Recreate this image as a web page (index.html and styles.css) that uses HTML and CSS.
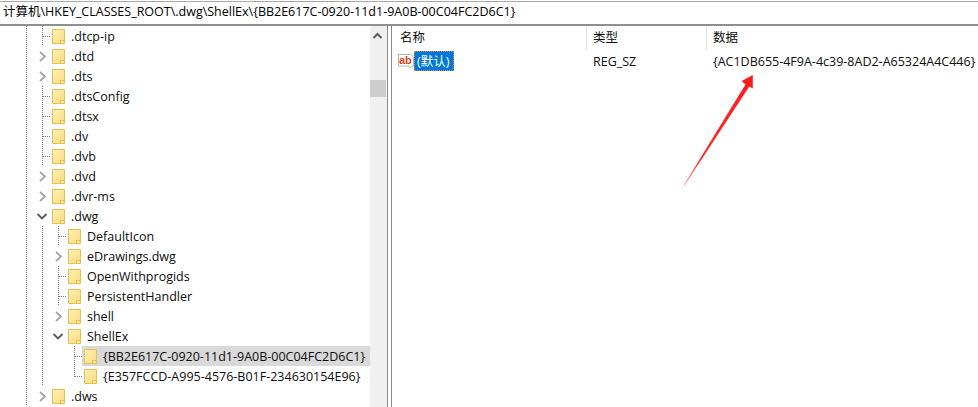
FILE: index.html
```html
<!DOCTYPE html>
<html lang="zh">
<head>
<meta charset="utf-8">
<title>注册表编辑器</title>
<link rel="stylesheet" href="styles.css">
</head>
<body>
<svg class="defs" width="0" height="0" aria-hidden="true">
  <defs>
    <linearGradient id="fg" x1="0" y1="0" x2="1" y2="1">
      <stop offset="0" stop-color="#fff0b8"/>
      <stop offset="1" stop-color="#fbdc80"/>
    </linearGradient>
    <symbol id="folder" viewBox="0 0 13 15">
      <path d="M.5.500H12.500V14.500H.5Z" fill="url(#fg)" stroke="#e8c04e"/>
      <path d="M8.500 14.500V11.500H12.500" fill="#fff0b8" stroke="#e8c04e"/>
    </symbol>
    <symbol id="cr" viewBox="0 0 16 20"><path d="M6 6l5 4.500-5 4.500" fill="none" stroke="#a6a6a6" stroke-width="1.800"/></symbol>
    <symbol id="cd" viewBox="0 0 16 20"><path d="M3.500 8l4.500 4.500L12.500 8" fill="none" stroke="#595959" stroke-width="1.800"/></symbol>
  </defs>
</svg>

<header class="address">计算机\HKEY_CLASSES_ROOT\.dwg\ShellEx\{BB2E617C-0920-11d1-9A0B-00C04FC2D6C1}</header>

<main class="panes">
  <nav class="tree">
    <div class="row"><i class="c v"></i><i class="c v t"></i><svg class="f"><use href="#folder"/></svg><span>.dtcp-ip</span></div>
    <div class="row"><i class="c v"></i><svg class="c"><use href="#cr"/></svg><svg class="f"><use href="#folder"/></svg><span>.dtd</span></div>
    <div class="row"><i class="c v"></i><svg class="c"><use href="#cr"/></svg><svg class="f"><use href="#folder"/></svg><span>.dts</span></div>
    <div class="row"><i class="c v"></i><i class="c v t"></i><svg class="f"><use href="#folder"/></svg><span>.dtsConfig</span></div>
    <div class="row"><i class="c v"></i><i class="c v t"></i><svg class="f"><use href="#folder"/></svg><span>.dtsx</span></div>
    <div class="row"><i class="c v"></i><i class="c v t"></i><svg class="f"><use href="#folder"/></svg><span>.dv</span></div>
    <div class="row"><i class="c v"></i><i class="c v t"></i><svg class="f"><use href="#folder"/></svg><span>.dvb</span></div>
    <div class="row"><i class="c v"></i><svg class="c"><use href="#cr"/></svg><svg class="f"><use href="#folder"/></svg><span>.dvd</span></div>
    <div class="row"><i class="c v"></i><svg class="c"><use href="#cr"/></svg><svg class="f"><use href="#folder"/></svg><span>.dvr-ms</span></div>
    <div class="row"><i class="c v"></i><svg class="c"><use href="#cd"/></svg><svg class="f"><use href="#folder"/></svg><span>.dwg</span></div>
    <div class="row"><i class="c v"></i><i class="c v"></i><i class="c v t"></i><svg class="f"><use href="#folder"/></svg><span>DefaultIcon</span></div>
    <div class="row"><i class="c v"></i><i class="c v"></i><svg class="c"><use href="#cr"/></svg><svg class="f"><use href="#folder"/></svg><span>eDrawings.dwg</span></div>
    <div class="row"><i class="c v"></i><i class="c v"></i><i class="c v t"></i><svg class="f"><use href="#folder"/></svg><span>OpenWithprogids</span></div>
    <div class="row"><i class="c v"></i><i class="c v"></i><i class="c v t"></i><svg class="f"><use href="#folder"/></svg><span>PersistentHandler</span></div>
    <div class="row"><i class="c v"></i><i class="c v"></i><svg class="c"><use href="#cr"/></svg><svg class="f"><use href="#folder"/></svg><span>shell</span></div>
    <div class="row"><i class="c v"></i><i class="c v"></i><svg class="c"><use href="#cd"/></svg><svg class="f"><use href="#folder"/></svg><span>ShellEx</span></div>
    <div class="row selected"><i class="c v"></i><i class="c v"></i><i class="c"></i><i class="c v t"></i><div class="sel"><svg class="f"><use href="#folder"/></svg><span>{BB2E617C-0920-11d1-9A0B-00C04FC2D6C1}</span></div></div>
    <div class="row"><i class="c v"></i><i class="c v"></i><i class="c"></i><i class="c l"></i><svg class="f"><use href="#folder"/></svg><span>{E357FCCD-A995-4576-B01F-234630154E96}</span></div>
    <div class="row"><i class="c v"></i><svg class="c"><use href="#cr"/></svg><svg class="f"><use href="#folder"/></svg><span>.dws</span></div>
  </nav>

  <div class="scrollbar">
    <svg class="up" viewBox="0 0 17 17"><path d="M3.500 12l4-4 4 4" fill="none" stroke="#606060" stroke-width="2"/></svg>
    <div class="thumb"></div>
  </div>

  <div class="splitter"></div>

  <section class="list">
    <div class="cols head">
      <div class="col name">名称</div>
      <div class="col type">类型</div>
      <div class="col data">数据</div>
    </div>
    <div class="cols item">
      <div class="col name">
        <svg class="ab" viewBox="0 0 16 16">
          <path d="M.5 1.500H12.500L15.500 4V12.500L12 14.500L9 13H.5Z" fill="#fff" stroke="#b5b5b5"/>
          <text x="1" y="11" class="abtext">ab</text>
        </svg>
        <span class="value">(默认)</span>
      </div>
      <div class="col type">REG_SZ</div>
      <div class="col data">{AC1DB655-4F9A-4c39-8AD2-A65324A4C446}</div>
    </div>
  </section>
</main>

<svg class="arrow" viewBox="0 0 978 407" aria-hidden="true">
  <defs>
    <linearGradient id="ag" gradientUnits="userSpaceOnUse" x1="684" y1="185" x2="752" y2="75">
      <stop offset="0" stop-color="#ff5a5a" stop-opacity=".6"/>
      <stop offset=".25" stop-color="#ff2a2a"/>
      <stop offset="1" stop-color="#ff1a1a"/>
    </linearGradient>
  </defs>
  <path d="M683.500 185.500L745.500 84.500L741.700 81L752.800 75L752.800 88.500L749.300 86.500L684.500 185.500Z" fill="url(#ag)"/>
</svg>
</body>
</html>
```

FILE: styles.css
```css
* { box-sizing: border-box; }
html, body { margin: 0; height: 100%; }
body {
  width: 978px;
  height: 407px;
  overflow: hidden;
  background: #fff;
  color: #0d0d0d;
  font: 12.500px/22px "Open Sans", "Noto Sans CJK SC", sans-serif;
  display: flex;
  flex-direction: column;
}
.defs { display: block; height: 0; }

.address {
  height: 25px;
  flex: none;
  padding-left: 3px;
  border-top: 1px solid #a9a9a9;
  margin-top: 1px;
  border-bottom: 2px solid #8f8f8f;
  font-size: 12.500px;
  line-height: 19px;
  color: #000;
  white-space: nowrap;
  overflow: hidden;
}
.panes { flex: 1; display: flex; min-height: 0; }

.tree { width: 370px; flex: none; overflow: hidden; }
.row { height: 20px; display: flex; padding-left: 18px; white-space: nowrap; }
.c { display: block; width: 16px; height: 20px; flex: none; }
.v { background: repeating-linear-gradient(#7a7a7a 0 1px, transparent 1px 2px) 8px 0/1px 100% no-repeat; }
.t {
  background:
    repeating-linear-gradient(#7a7a7a 0 1px, transparent 1px 2px) 8px 0/1px 100% no-repeat,
    repeating-linear-gradient(90deg, #7a7a7a 0 1px, transparent 1px 2px) 9px 10px/7px 1px no-repeat;
}
.l {
  background:
    repeating-linear-gradient(#7a7a7a 0 1px, transparent 1px 2px) 8px 0/1px 11px no-repeat,
    repeating-linear-gradient(90deg, #7a7a7a 0 1px, transparent 1px 2px) 9px 10px/7px 1px no-repeat;
}
.f { width: 13px; height: 15px; flex: none; margin: 3px 6px 0 2px; }
.sel { flex: 1; display: flex; background: #d9d9d9; }

.scrollbar { width: 17px; flex: none; background: #f0f0f0; }
.up { display: block; width: 17px; height: 17px; }
.thumb { width: 16px; height: 17px; margin-top: 37px; background: #cdcdcd; }

.splitter {
  width: 5px;
  flex: none;
  border-left: 1px solid #8b8b8b;
  border-right: 1px solid #8b8b8b;
}

.list { flex: 1; min-width: 0; }
.cols { display: flex; }
.head { height: 25px; }
.head .col { height: 24px; line-height: 24px; }
.item { height: 20px; }
.col { white-space: nowrap; flex: none; }
.name { width: 194px; padding-left: 8px; }
.type { width: 120px; padding-left: 7px; }
.data { padding-left: 7px; }
.head .type, .head .data { border-left: 1px solid #e3e3e3; padding-left: 6px; }
.item .name { display: flex; padding-left: 6px; }
.ab { width: 16px; height: 16px; margin-top: 2px; flex: none; }
.abtext { font: bold 11px "Liberation Sans", sans-serif; fill: #d9441c; }
.value {
  width: 40px;
  height: 20px;
  background: #0078d7;
  color: #fff;
  outline: 1px dotted #e08a2e;
  outline-offset: -1px;
  padding-left: 3px;
  line-height: 21px;
}

.arrow { position: absolute; left: 0; top: 0; width: 978px; height: 407px; pointer-events: none; }
```
